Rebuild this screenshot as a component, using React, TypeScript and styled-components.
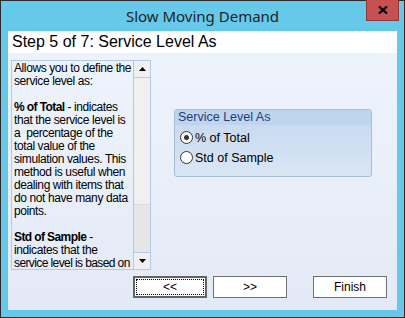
import * as React from 'react';
import styled, { createGlobalStyle } from 'styled-components';

const GlobalStyle = createGlobalStyle`
	html, body {
		margin: 0;
		padding: 0;
		background: #ffffff;
	}
`;

const Window = styled.div`
	box-sizing: border-box;
	width: 405px;
	height: 318px;
	border: 1px solid #2b2b2b;
	background-color: #66c9ea;
	display: flex;
	flex-direction: column;
	padding: 0 7px 7px 7px;
`;

const TitleBar = styled.div`
	position: relative;
	height: 30px;
	display: flex;
	align-items: center;
	justify-content: center;
	font-family: 'Noto Sans', 'Open Sans', sans-serif;
	font-size: 15px;
	color: #1f1f1f;
`;

const CloseButton = styled.div`
	position: absolute;
	top: -1px;
	right: -2px;
	width: 31px;
	height: 20px;
	background-color: #c75050;
	border: 1px solid #8c3a3a;
	border-top: none;
	display: flex;
	align-items: center;
	justify-content: center;
`;

const Client = styled.div`
	flex: 1;
	display: flex;
	flex-direction: column;
	background: linear-gradient(to bottom, #eef4fc 0%, #e9f0fa 50%, #e3e9f6 100%);
`;

const StepHeader = styled.div`
	height: 22px;
	background-color: #ffffff;
	display: flex;
	align-items: center;
	padding-left: 4px;
	font-family: 'Liberation Sans', Arial, sans-serif;
	font-size: 16px;
	color: #000000;
`;

const Body = styled.div`
	flex: 1;
	display: flex;
	align-items: flex-start;
	padding: 7px 0 0 3px;
	gap: 23px;
`;

const HelpBox = styled.div`
	box-sizing: border-box;
	width: 140px;
	height: 210px;
	border: 1px solid #b5c8e6;
	display: flex;
`;

const HelpText = styled.div`
	flex: 1;
	overflow: hidden;
	white-space: nowrap;
	padding: 1px 0 0 2px;
	font-family: 'Liberation Sans', Arial, sans-serif;
	font-size: 12px;
	letter-spacing: -0.4px;
	line-height: 13px;
	color: #000000;
	p {
		margin: 0 0 13px 0;
	}
	b {
		font-weight: bold;
		letter-spacing: -0.6px;
	}
`;

const TightLine = styled.span`
	letter-spacing: -0.6px;
`;

const ScrollBar = styled.div`
	width: 16px;
	display: flex;
	flex-direction: column;
	border-left: 1px solid #b5c8e6;
	background-color: #e6e6e6;
`;

const ScrollArrow = styled.div<{ $down?: boolean }>`
	height: 16px;
	background-color: #f0f0f0;
	display: flex;
	align-items: center;
	justify-content: center;
	border-bottom: ${(p) => (p.$down ? 'none' : '1px solid #b5c8e6')};
	border-top: ${(p) => (p.$down ? '1px solid #b5c8e6' : 'none')};
`;

const ScrollThumb = styled.div`
	height: 126px;
	background-color: #f0f0f0;
	border-bottom: 1px solid #dcdcdc;
`;

const ScrollTrack = styled.div`
	flex: 1;
`;

const GroupBox = styled.div`
	box-sizing: border-box;
	margin-top: 49px;
	width: 198px;
	height: 68px;
	border: 1px solid #a9bcd6;
	border-radius: 3px;
	background: linear-gradient(to bottom, #c5d8ee 0%, #d9e6f4 100%);
	display: flex;
	flex-direction: column;
`;

const GroupTitle = styled.div`
	height: 15px;
	padding-left: 3px;
	background-color: #bfd4ee;
	font-family: 'Liberation Sans', Arial, sans-serif;
	font-size: 12.5px;
	line-height: 15px;
	color: #1c3f7a;
`;

const RadioList = styled.div`
	display: flex;
	flex-direction: column;
	gap: 7px;
	padding: 6px 0 0 5px;
`;

const RadioRow = styled.label`
	display: flex;
	align-items: center;
	gap: 2px;
	font-family: 'Liberation Sans', Arial, sans-serif;
	font-size: 12.5px;
	color: #000000;
	height: 13px;
`;

const RadioCircle = styled.span<{ $checked?: boolean }>`
	box-sizing: border-box;
	width: 13px;
	height: 13px;
	border-radius: 50%;
	border: 1px solid #333333;
	background-color: #ffffff;
	display: flex;
	align-items: center;
	justify-content: center;
	&::after {
		content: '';
		width: 5px;
		height: 5px;
		border-radius: 50%;
		background-color: ${(p) => (p.$checked ? '#333333' : 'transparent')};
	}
`;

const Footer = styled.div`
	height: 34px;
	display: flex;
	align-items: flex-start;
	padding-left: 125px;
	gap: 6px;
`;

const Button = styled.div<{ $default?: boolean; $gapBefore?: number }>`
	box-sizing: border-box;
	width: 74px;
	height: 22px;
	margin-left: ${(p) => p.$gapBefore ?? 0}px;
	background-color: #ffffff;
	border: ${(p) => (p.$default ? '2px solid #646464' : '1px solid #707070')};
	display: flex;
	align-items: center;
	justify-content: center;
	padding: 1px;
	font-family: 'Liberation Sans', Arial, sans-serif;
	font-size: 12px;
	color: #000000;
`;

const FocusRing = styled.div`
	box-sizing: border-box;
	width: 100%;
	height: 100%;
	border: 1px dotted #000000;
	display: flex;
	align-items: center;
	justify-content: center;
`;

const Arrow: React.FC<{ down?: boolean }> = ({ down }) => (
	<svg width="7" height="4" viewBox="0 0 7 4">
		<path d={down ? 'M0 0 H7 L3.5 4 Z' : 'M0 4 H7 L3.5 0 Z'} fill="#000000" />
	</svg>
);

export default function App() {
	return (
		<>
			<GlobalStyle />
			<Window>
				<TitleBar>
					Slow Moving Demand
					<CloseButton>
						<svg width="10" height="8" viewBox="0 0 10 8">
							<path d="M1 0.5 L9 7.5 M9 0.5 L1 7.5" stroke="#000000" strokeWidth="2.2" />
						</svg>
					</CloseButton>
				</TitleBar>
				<Client>
					<StepHeader>Step 5 of 7: Service Level As</StepHeader>
					<Body>
						<HelpBox>
							<HelpText>
								<p>
									Allows you to define the<br />
									service level as:
								</p>
								<p>
									<b>% of Total</b> - indicates<br />
									that the service level is<br />
									a&nbsp; percentage of the<br />
									total value of the<br />
									simulation values. This<br />
									method is useful when<br />
									dealing with items that<br />
									do not have many data<br />
									points.
								</p>
								<p>
									<b>Std of Sample</b> -<br />
									indicates that the<br />
									<TightLine>service level is based on</TightLine>
								</p>
							</HelpText>
							<ScrollBar>
								<ScrollArrow>
									<Arrow />
								</ScrollArrow>
								<ScrollThumb />
								<ScrollTrack />
								<ScrollArrow $down>
									<Arrow down />
								</ScrollArrow>
							</ScrollBar>
						</HelpBox>
						<GroupBox>
							<GroupTitle>Service Level As</GroupTitle>
							<RadioList>
								<RadioRow>
									<RadioCircle $checked />
									% of Total
								</RadioRow>
								<RadioRow>
									<RadioCircle />
									Std of Sample
								</RadioRow>
							</RadioList>
						</GroupBox>
					</Body>
					<Footer>
						<Button $default>
							<FocusRing>&lt;&lt;</FocusRing>
						</Button>
						<Button>&gt;&gt;</Button>
						<Button $gapBefore={20}>Finish</Button>
					</Footer>
				</Client>
			</Window>
		</>
	);
}
